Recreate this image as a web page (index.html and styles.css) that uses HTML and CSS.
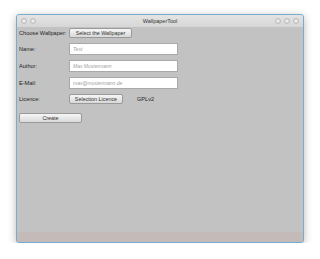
FILE: index.html
```html
<!DOCTYPE html>
<html>
<head>
    <title>WallpaperTool</title>
    <link rel="stylesheet" href="styles.css">
</head>
<body>
    <div class="window">
        <div class="titlebar">
            <div class="win-buttons">
                <span class="circle"></span>
                <span class="circle"></span>
            </div>
            <div class="title">WallpaperTool</div>
            <div class="win-buttons right">
                <span class="circle"></span>
                <span class="circle"></span>
                <span class="circle"></span>
            </div>
        </div>

        <div class="content">
            <div class="row row-btn">
                <label>Choose Wallpaper:</label>
                <button class="btn btn-wide">Select the Wallpaper</button>
            </div>
            <div class="row">
                <label>Name:</label>
                <input type="text" placeholder="Test">
            </div>
            <div class="row">
                <label>Author:</label>
                <input type="text" placeholder="Max Mustermann">
            </div>
            <div class="row">
                <label>E-Mail:</label>
                <input type="text" placeholder="max@mustermann.de">
            </div>
            <div class="row row-btn">
                <label>Licence:</label>
                <button class="btn btn-licence">Selection Licence</button>
                <span class="licence-name">GPLv2</span>
            </div>
            <div class="row row-btn create-row">
                <button class="btn btn-create">Create</button>
            </div>
        </div>

        <div class="statusbar"></div>
    </div>
</body>
</html>
```

FILE: styles.css
```css
body {
    margin: 0;
    background: #ffffff;
    font-family: "Liberation Sans", sans-serif;
}
.window {
    margin: 14px 0 0 16px;
    width: 288px;
    height: 229px;
    box-sizing: border-box;
    border: 1px solid #78abcc;
    border-radius: 3px;
    background: #c2c2c2;
    box-shadow: 0 2px 8px rgba(0,0,0,0.28);
    display: flex;
    flex-direction: column;
    overflow: hidden;
}
.titlebar {
    height: 12px;
    background: linear-gradient(#e4e4e4, #d6d6d6);
    display: flex;
    align-items: center;
    padding: 0 4px;
}
.title {
    flex: 1;
    text-align: center;
    font-size: 5.5px;
    color: #333;
}
.win-buttons {
    display: flex;
    gap: 3px;
    width: 30px;
}
.win-buttons.right {
    justify-content: flex-end;
}
.circle {
    width: 6px;
    height: 6px;
    border-radius: 50%;
    box-sizing: border-box;
    border: 1px solid #bdbdbd;
    background: radial-gradient(#f4f4f4, #d4d4d4);
}
.content {
    flex: 1;
    padding: 1px 2px 0 2px;
    display: flex;
    flex-direction: column;
    gap: 5px;
}
.row {
    display: flex;
    align-items: center;
    height: 12px;
}
.row-btn {
    height: 10px;
}
.row label {
    width: 50px;
    flex-shrink: 0;
    white-space: nowrap;
    font-size: 5.6px;
    color: #1e1e1e;
}
.row input {
    width: 109px;
    height: 12px;
    box-sizing: border-box;
    border: 1px solid #a9a9a9;
    background: #fff;
    padding: 0 3px;
    font-family: "Liberation Sans", sans-serif;
    font-size: 5px;
    font-style: italic;
    outline: none;
}
.row input::placeholder {
    color: #a0a0a0;
}
.btn {
    height: 10px;
    flex-shrink: 0;
    box-sizing: border-box;
    border: 1px solid #9a9a9a;
    border-radius: 2px;
    background: linear-gradient(#f6f6f6, #d9d9d9);
    font-family: "Liberation Sans", sans-serif;
    font-size: 5.4px;
    color: #333;
    padding: 0;
    white-space: nowrap;
}
.btn-wide {
    width: 63px;
}
.btn-licence {
    width: 54px;
}
.licence-name {
    margin-left: 14px;
    font-size: 5.6px;
    color: #1e1e1e;
}
.create-row {
    margin-top: 4px;
}
.btn-create {
    width: 63px;
}
.statusbar {
    height: 10px;
    background: #c4bbb8;
}
```
